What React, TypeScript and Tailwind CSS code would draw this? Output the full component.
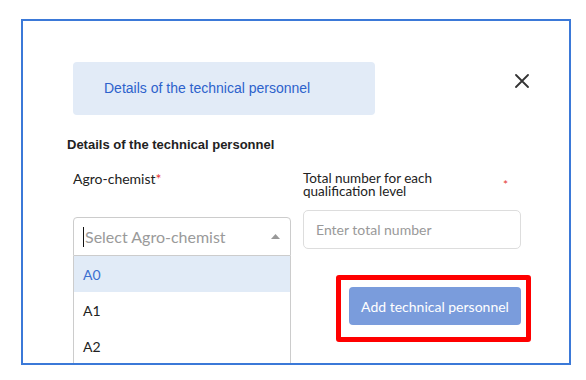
import React from "react";

export default function App() {
  const nunito = { fontFamily: "Lato, 'Open Sans', sans-serif" };
  return (
    <div className="w-[586px] h-[380px] bg-white pt-[19px] pl-[21px]">
      <div className="w-[550px] h-[346px] border-2 border-[#3b79d8] overflow-hidden">
        {/* header */}
        <div className="flex mt-[41px] ml-[50px]">
          <div className="w-[302px] h-[53px] rounded-[4px] bg-[#e2ebf7] flex items-center pl-[31px]">
            <span className="text-[14px] text-[#2d62cc] font-['Liberation_Sans',Arial,sans-serif]">
              Details of the technical personnel
            </span>
          </div>
          <button className="ml-auto mr-[40px] mt-[12px] w-[14px] h-[14px] text-[#333]">
            <svg width="14" height="14" viewBox="0 0 14 14" fill="none" stroke="currentColor" strokeWidth="1.8" strokeLinecap="round">
              <path d="M1 1L13 13M13 1L1 13" />
            </svg>
          </button>
        </div>

        {/* title */}
        <div className="mt-[22px] ml-[44px] text-[13px] leading-[16px] font-bold text-[#222] font-['Liberation_Sans',Arial,sans-serif]">
          Details of the technical personnel
        </div>

        {/* columns */}
        <div className="mt-[17px] ml-[50px] flex gap-[12px]" style={nunito}>
          <div className="w-[218px]">
            <div className="text-[14px] leading-[18px] text-[#222]">
              Agro-chemist<span className="text-[#e53935]">*</span>
            </div>
            <div className="mt-[29px] h-[39px] border border-[#ccc] rounded-t-[4px] flex items-center pl-[9px] pr-[10px]">
              <span className="w-[1px] h-[20px] bg-[#111]"></span>
              <span className="text-[16px] text-[#9a9a9a] ml-[1px]">Select Agro-chemist</span>
              <svg className="ml-auto" width="9" height="5" viewBox="0 0 9 5">
                <path d="M0 5L4.5 0L9 5Z" fill="#999" />
              </svg>
            </div>
            <div className="border-x border-[#ccc]">
              <div className="h-[36px] bg-[#e1ebf7] flex items-center pl-[9px] text-[14px] text-[#3b6fd0]">A0</div>
              <div className="h-[36px] flex items-center pl-[9px] text-[14px] text-[#222]">A1</div>
              <div className="h-[36px] flex items-center pl-[9px] text-[14px] text-[#222]">A2</div>
            </div>
          </div>
          <div className="w-[218px]">
            <div className="pt-[2px] flex text-[13.5px] leading-[13px] text-[#222]">
              <span>
                Total number for each
                <br />
                qualification level
              </span>
              <span className="ml-auto mr-[13px] mt-[6px] text-[#e53935] text-[12px]">*</span>
            </div>
            <div className="mt-[12px] h-[39px] border border-[#ddd] rounded-[5px] flex items-center pl-[12px] text-[14px] text-[#999]">
              Enter total number
            </div>
            <div className="mt-[26px] ml-[33px] w-[195px] border-[5px] border-[#ff0000] rounded-[3px] pt-[7px] pl-[8px] pr-[5px] pb-[12px]">
              <button className="w-[172px] h-[38px] rounded-[4px] bg-[#7a9cdc] text-white text-[14px]">
                Add technical personnel
              </button>
            </div>
          </div>
        </div>
      </div>
    </div>
  );
}
